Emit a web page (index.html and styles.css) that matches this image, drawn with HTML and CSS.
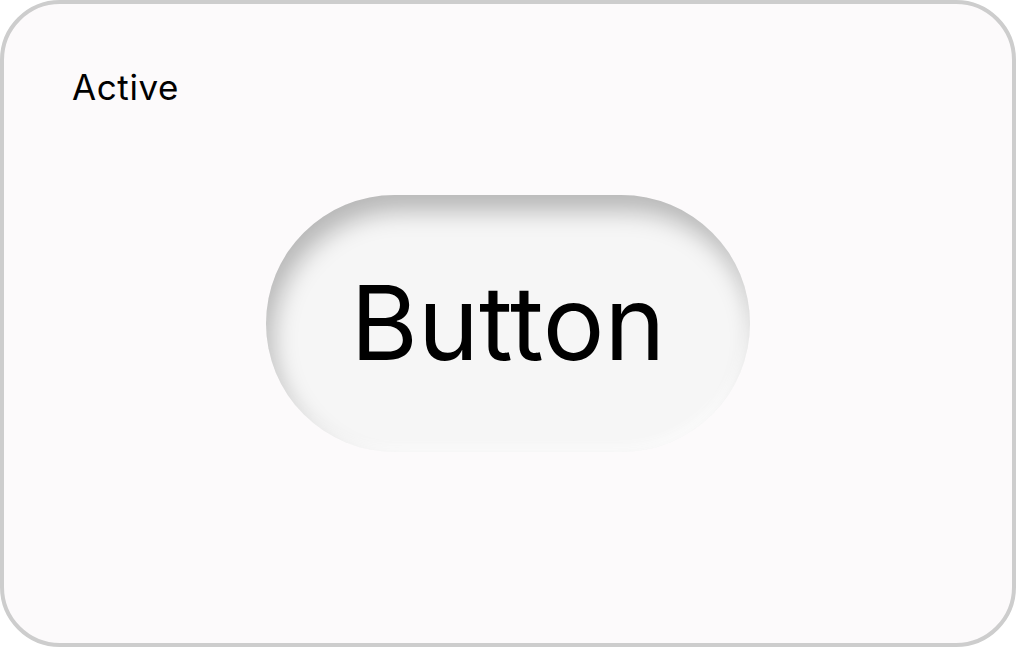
FILE: index.html
```html
<!DOCTYPE html>
<html>
<head>
<meta charset="utf-8">
<link rel="stylesheet" href="styles.css">
</head>
<body>
<div class="card">
  <div class="label">Active</div>
  <div class="btn">Button</div>
</div>
</body>
</html>
```
FILE: styles.css
```css
html, body {
  margin: 0;
  padding: 0;
  background: #ffffff;
}
body {
  width: 1016px;
  height: 647px;
  font-family: "Inter", "Noto Sans", sans-serif;
}
.card {
  box-sizing: border-box;
  width: 1016px;
  height: 647px;
  border: 4px solid #cdcdcd;
  border-radius: 60px;
  background: #fcfafb;
  display: grid;
  grid-template: 1fr / 1fr;
}
.label {
  grid-area: 1 / 1;
  align-self: start;
  justify-self: start;
  margin: 66px 0 0 68px;
  font-size: 35px;
  line-height: 35px;
  letter-spacing: 0.6px;
  color: #000;
}
.btn {
  grid-area: 1 / 1;
  align-self: center;
  justify-self: center;
  width: 484px;
  height: 257px;
  border-radius: 129px;
  background: #f6f6f6;
  box-shadow: inset 6px 16px 24px rgba(0, 0, 0, 0.26), inset -4px -6px 10px rgba(255, 255, 255, 0.8);
  display: flex;
  align-items: center;
  justify-content: center;
  font-size: 103px;
  line-height: 1;
  color: #000;
  padding-bottom: 2px;
  box-sizing: border-box;
}
```
